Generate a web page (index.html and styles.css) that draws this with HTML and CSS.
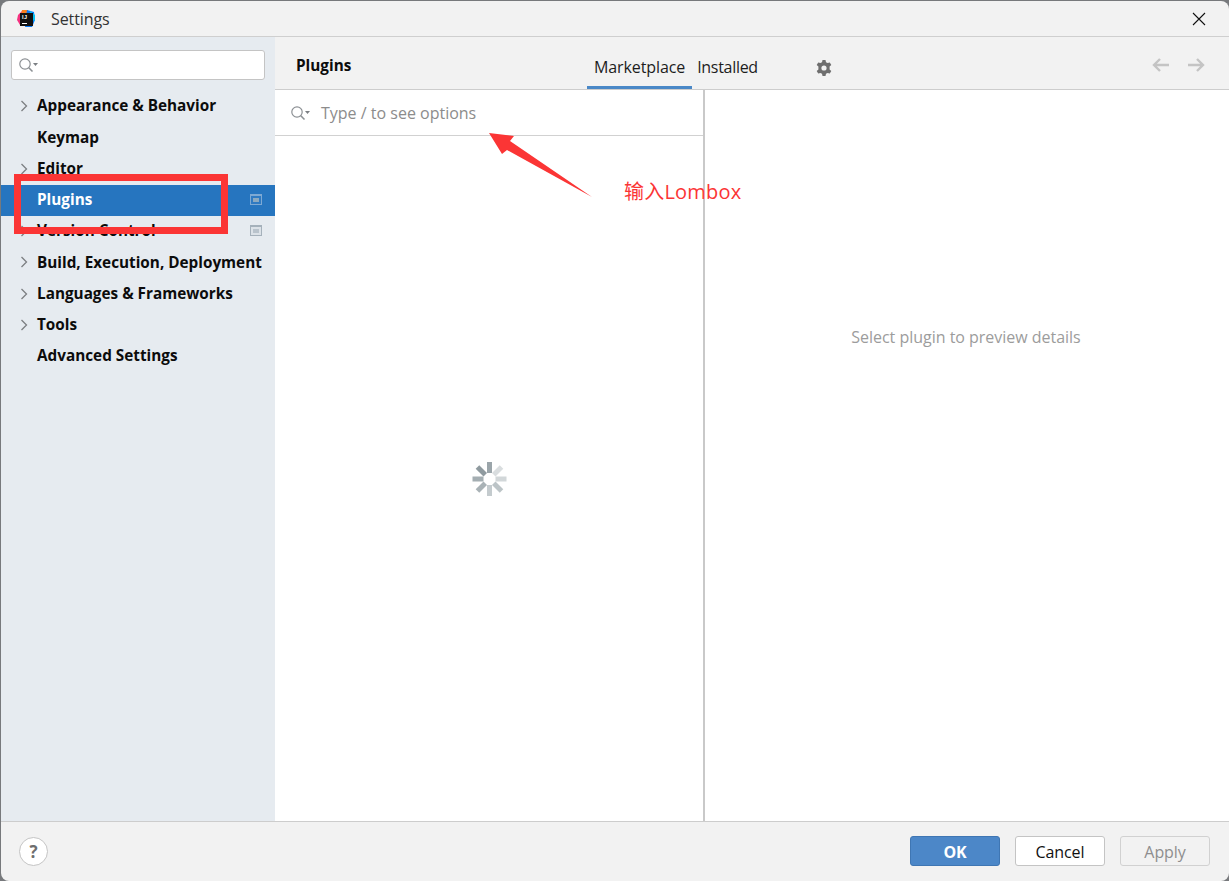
FILE: index.html
```html
<!DOCTYPE html>
<html>
<head>
	<title>Settings</title>
	<link rel="stylesheet" href="styles.css">
</head>
<body>
	<div class="window">
		<div class="titlebar">
			<svg class="app-icon" width="20" height="20" viewBox="0 0 20 20">
				<path d="M2 6 L7 1 L12 2 L10 10 L4 16 L1 11 Z" fill="#f5317f"/>
				<path d="M6 1 L12 1 L11 6 L5 6 Z" fill="#fc801d"/>
				<path d="M11 1 L18 3 L19 11 L16 18 L9 18 L10 8 Z" fill="#087cfa"/>
				<path d="M14 2 L19 6 L19 12 L14 10 Z" fill="#07c3f2"/>
				<rect x="4" y="4" width="13" height="13" fill="#111"/>
				<text class="app-icon-text" x="6" y="10">IJ</text>
				<rect x="6" y="14" width="5" height="1" fill="#fff"/>
			</svg>
			<span class="title">Settings</span>
			<svg class="close" width="14" height="14" viewBox="0 0 14 14">
				<path d="M1 1 L13 13 M13 1 L1 13" stroke="#111" stroke-width="1.1" fill="none"/>
			</svg>
		</div>

		<div class="main">
			<div class="sidebar">
				<div class="sidebar-search">
					<svg width="22" height="16" viewBox="0 0 22 16">
						<circle cx="7" cy="7" r="5.2" fill="none" stroke="#8c9094" stroke-width="1.2"/>
						<path d="M10.8 10.8 L14.5 14.5" stroke="#8c9094" stroke-width="1.6"/>
						<path d="M15 6 L20 6 L17.5 9 Z" fill="#7b7f83"/>
					</svg>
				</div>
				<div class="tree">
					<div class="tree-row"><svg class="chevron" width="8" height="12" viewBox="0 0 8 12"><path d="M1.5 1 L6.5 6 L1.5 11" fill="none" stroke="#7c7f82" stroke-width="1.3"/></svg>Appearance &amp; Behavior</div>
					<div class="tree-row">Keymap</div>
					<div class="tree-row"><svg class="chevron" width="8" height="12" viewBox="0 0 8 12"><path d="M1.5 1 L6.5 6 L1.5 11" fill="none" stroke="#7c7f82" stroke-width="1.3"/></svg>Editor</div>
					<div class="tree-row selected">Plugins<span class="project-mark"></span></div>
					<div class="tree-row"><svg class="chevron" width="8" height="12" viewBox="0 0 8 12"><path d="M1.5 1 L6.5 6 L1.5 11" fill="none" stroke="#7c7f82" stroke-width="1.3"/></svg>Version Control<span class="project-mark"></span></div>
					<div class="tree-row"><svg class="chevron" width="8" height="12" viewBox="0 0 8 12"><path d="M1.5 1 L6.5 6 L1.5 11" fill="none" stroke="#7c7f82" stroke-width="1.3"/></svg>Build, Execution, Deployment</div>
					<div class="tree-row"><svg class="chevron" width="8" height="12" viewBox="0 0 8 12"><path d="M1.5 1 L6.5 6 L1.5 11" fill="none" stroke="#7c7f82" stroke-width="1.3"/></svg>Languages &amp; Frameworks</div>
					<div class="tree-row"><svg class="chevron" width="8" height="12" viewBox="0 0 8 12"><path d="M1.5 1 L6.5 6 L1.5 11" fill="none" stroke="#7c7f82" stroke-width="1.3"/></svg>Tools</div>
					<div class="tree-row">Advanced Settings</div>
				</div>
			</div>

			<div class="content">
				<div class="header">
					<div class="header-title">Plugins</div>
					<div class="tabs">
						<div class="tab active">Marketplace</div>
						<div class="tab installed">Installed</div>
					</div>
					<svg class="gear" width="18" height="18" viewBox="0 0 18 18">
						<path fill="#6e6e6e" fill-rule="evenodd" d="M7.5 1 L10.5 1 L11 3.2 L12.6 4.1 L14.8 3.4 L16.3 6 L14.6 7.5 L14.6 10.5 L16.3 12 L14.8 14.6 L12.6 13.9 L11 14.8 L10.5 17 L7.5 17 L7 14.8 L5.4 13.9 L3.2 14.6 L1.7 12 L3.4 10.5 L3.4 7.5 L1.7 6 L3.2 3.4 L5.4 4.1 L7 3.2 Z M9 6.4 A2.6 2.6 0 1 0 9 11.6 A2.6 2.6 0 1 0 9 6.4 Z"/>
					</svg>
					<div class="nav-arrows">
						<svg width="18" height="14" viewBox="0 0 18 14"><path d="M17 7 L2 7 M8 1 L2 7 L8 13" fill="none" stroke="#c4c4c4" stroke-width="2.4"/></svg>
						<svg width="18" height="14" viewBox="0 0 18 14"><path d="M1 7 L16 7 M10 1 L16 7 L10 13" fill="none" stroke="#c4c4c4" stroke-width="2.4"/></svg>
					</div>
				</div>
				<div class="panes">
					<div class="list-pane">
						<div class="plugin-search">
							<svg width="22" height="16" viewBox="0 0 22 16">
								<circle cx="7" cy="7" r="5.2" fill="none" stroke="#8c9094" stroke-width="1.2"/>
								<path d="M10.8 10.8 L14.5 14.5" stroke="#8c9094" stroke-width="1.6"/>
								<path d="M15 6 L20 6 L17.5 9 Z" fill="#7b7f83"/>
							</svg>
							<span class="placeholder">Type / to see options</span>
						</div>
						<div class="loading">
							<svg width="36" height="36" viewBox="0 0 36 36">
								<rect x="16" y="1" width="5" height="11" fill="#9ba5aa"/>
								<rect x="16" y="1" width="5" height="11" fill="#d9dddf" transform="rotate(45 18.5 18)"/>
								<rect x="16" y="1" width="5" height="11" fill="#d2d7d9" transform="rotate(90 18.5 18)"/>
								<rect x="16" y="1" width="5" height="11" fill="#bcc4c7" transform="rotate(135 18.5 18)"/>
								<rect x="16" y="1" width="5" height="11" fill="#c4cbce" transform="rotate(180 18.5 18)"/>
								<rect x="16" y="1" width="5" height="11" fill="#a9b2b6" transform="rotate(225 18.5 18)"/>
								<rect x="16" y="1" width="5" height="11" fill="#a4aeb2" transform="rotate(270 18.5 18)"/>
								<rect x="16" y="1" width="5" height="11" fill="#8f9a9f" transform="rotate(315 18.5 18)"/>
							</svg>
						</div>
					</div>
					<div class="detail-pane">Select plugin to preview details</div>
				</div>
			</div>
		</div>

		<div class="footer">
			<div class="help">?</div>
			<div class="buttons">
				<div class="btn primary">OK</div>
				<div class="btn">Cancel</div>
				<div class="btn disabled">Apply</div>
			</div>
		</div>
	</div>

	<!-- red marks drawn on top of the screenshot -->
	<div class="mark-box"></div>
	<svg class="mark-arrow" width="110" height="70" viewBox="0 0 110 70">
		<polygon points="0,1 25,4 21,9 103,65 18,18 13,22" fill="#fb3535"/>
	</svg>
	<div class="mark-text">输入Lombox</div>
</body>
</html>
```

FILE: styles.css
```css
html, body {
	margin: 0;
	height: 100%;
}

body {
	background-color: #77797c;
	font-family: 'Open Sans', 'Noto Sans', sans-serif;
	overflow: hidden;
	position: relative;
}

.window {
	height: 880px;
	width: 1228px;
	margin-left: 1px;
	margin-top: 1px;
	background-color: #f2f2f2;
	border-radius: 8px;
	overflow: hidden;
	display: flex;
	flex-direction: column;
}

.titlebar {
	height: 35px;
	flex: none;
	display: flex;
	align-items: center;
	border-bottom: 1px solid #cfcfcf;
	padding-left: 15px;
	padding-right: 23px;
}

.app-icon {
	margin-right: 15px;
}

.app-icon-text {
	font-family: 'Liberation Sans', sans-serif;
	font-size: 5.5px;
	font-weight: bold;
	letter-spacing: 0.5px;
	fill: #fff;
}

.title {
	font-size: 16px;
	color: #333;
	flex: 1;
	letter-spacing: -0.1px;
}

.main {
	flex: 1;
	display: flex;
	min-height: 0;
}

.sidebar {
	width: 274px;
	flex: none;
	background-color: #e6ebf0;
}

.sidebar-search {
	height: 28px;
	margin: 13px 10px 0 10px;
	background-color: #fff;
	border: 1px solid #c4c4c4;
	border-radius: 3px;
	display: flex;
	align-items: center;
	padding-left: 6px;
}

.tree {
	margin-top: 11px;
}

.tree-row {
	height: 31.25px;
	box-sizing: border-box;
	display: flex;
	align-items: center;
	padding-left: 36px;
	padding-bottom: 2.5px;
	position: relative;
	font-size: 15.3px;
	font-weight: 700;
	color: #0c0c0c;
	white-space: nowrap;
}

.tree-row.selected {
	background-color: #2675bf;
	color: #fff;
}

.chevron {
	position: absolute;
	left: 19px;
	top: 9px;
}

.project-mark {
	position: absolute;
	right: 13px;
	top: 9px;
	width: 12px;
	height: 11px;
	box-sizing: border-box;
	border: 1px solid #a5b1bb;
	border-top-width: 2px;
	background-color: #dce2e8;
}

.project-mark::after {
	content: '';
	display: block;
	margin: 2px;
	height: 4px;
	background-color: #b9c3cc;
}

.selected .project-mark {
	background-color: #2f7ac2;
	border-color: #7da9d4;
}

.selected .project-mark::after {
	background-color: #8ba9c0;
}

.content {
	flex: 1;
	display: flex;
	flex-direction: column;
	min-width: 0;
}

.header {
	height: 52px;
	flex: none;
	display: flex;
	align-items: stretch;
	border-bottom: 1px solid #cdcdcd;
	position: relative;
	padding-left: 21px;
}

.header-title {
	width: 291px;
	font-size: 15.3px;
	font-weight: 700;
	color: #0c0c0c;
	line-height: 56px;
}

.tabs {
	display: flex;
	width: 228px;
}

.tab {
	padding: 0 6px;
	font-size: 16px;
	color: #1d1d1d;
	line-height: 60px;
	height: 52px;
	box-sizing: border-box;
	letter-spacing: -0.1px;
}

.tab.active {
	padding: 0 7px;
	border-bottom: 3px solid #4a88c7;
}

.tab.installed {
	padding-left: 5px;
	letter-spacing: -0.3px;
}

.gear {
	align-self: center;
	margin-top: 9px;
}

.nav-arrows {
	position: absolute;
	right: 24px;
	top: 21px;
	display: flex;
	gap: 17px;
}

.panes {
	flex: 1;
	display: flex;
	background-color: #fff;
	min-height: 0;
}

.list-pane {
	width: 428px;
	flex: none;
	border-right: 2px solid #c9c9c9;
	display: flex;
	flex-direction: column;
}

.plugin-search {
	height: 45px;
	flex: none;
	border-bottom: 1px solid #d1d1d1;
	display: flex;
	align-items: center;
	padding-left: 15px;
}

.placeholder {
	margin-left: 9px;
	font-size: 16px;
	color: #8c8c8c;
}

.loading {
	flex: 1;
	display: flex;
	align-items: center;
	justify-content: center;
}

.detail-pane {
	flex: 1;
	text-align: center;
	padding-top: 236px;
	padding-right: 2px;
	font-size: 16px;
	color: #9c9c9c;
	letter-spacing: -0.02px;
}

.footer {
	height: 59px;
	flex: none;
	border-top: 1px solid #cdcdcd;
	display: flex;
	align-items: center;
	justify-content: space-between;
	padding: 0 19px 0 18px;
}

.help {
	width: 27px;
	height: 27px;
	border-radius: 50%;
	background-color: #fff;
	border: 1px solid #c4c4c4;
	text-align: center;
	line-height: 27px;
	font-size: 17px;
	font-weight: 700;
	color: #6e6e6e;
}

.buttons {
	display: flex;
	gap: 15px;
	margin-bottom: 2px;
}

.btn {
	width: 90px;
	height: 30px;
	box-sizing: border-box;
	line-height: 31px;
	background-color: #fff;
	border-radius: 3px;
	border: 1px solid #c4c4c4;
	text-align: center;
	font-size: 16px;
	color: #111;
	letter-spacing: -0.1px;
}

.btn.primary {
	background-color: #4c87c8;
	border-color: #3f76b3;
	color: #fff;
	font-weight: 700;
}

.btn.disabled {
	background-color: #f2f2f2;
	border-color: #d1d1d1;
	color: #8e8e8e;
}

.mark-box {
	position: absolute;
	left: 14px;
	top: 174px;
	width: 200px;
	height: 46px;
	border: 7px solid #fb3535;
}

.mark-arrow {
	position: absolute;
	left: 489px;
	top: 132px;
}

.mark-text {
	position: absolute;
	left: 624px;
	top: 178px;
	font-family: 'Open Sans', 'Noto Sans CJK SC', sans-serif;
	font-size: 20px;
	line-height: 28px;
	letter-spacing: 0.2px;
	color: #fb3535;
}
```
